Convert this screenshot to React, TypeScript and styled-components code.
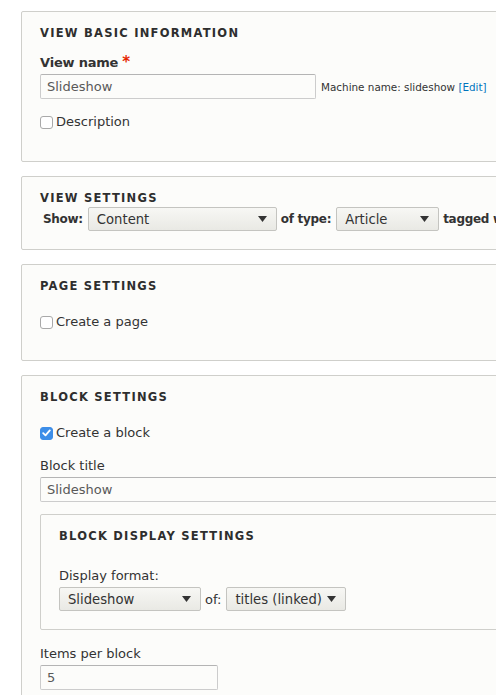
import React from "react";
import styled, { createGlobalStyle } from "styled-components";

const Global = createGlobalStyle`
  html, body { margin: 0; padding: 0; background: #ffffff; overflow: hidden; }
  body { font-family: "DejaVu Sans", "Liberation Sans", sans-serif; color: #333; font-size: 13px; }
  * { box-sizing: border-box; }
`;

const Page = styled.div`
  width: 496px;
  height: 695px;
  overflow: hidden;
  padding: 11px 0 0 21px;
  display: flex;
  flex-direction: column;
  gap: 14px;
`;

const Fieldset = styled.section<{ $pb: number; $inner?: boolean }>`
  width: ${(p) => (p.$inner ? "500px" : "540px")};
  flex-shrink: 0;
  border: 1px solid #cfcfcb;
  border-radius: 2px;
  background: #fcfcfa;
  padding: 12px 18px ${(p) => p.$pb}px 18px;
  display: flex;
  flex-direction: column;
`;

const Legend = styled.div`
  font-weight: bold;
  font-size: 11.5px;
  line-height: 18px;
  letter-spacing: 1.25px;
  text-transform: uppercase;
  color: #2e2e2e;
`;

const Label = styled.div<{ $bold?: boolean; $mt: number }>`
  margin-top: ${(p) => p.$mt}px;
  font-weight: ${(p) => (p.$bold ? "bold" : "normal")};
  letter-spacing: ${(p) => (p.$bold ? "-0.2px" : "0")};
  line-height: 18px;
  font-size: 13px;
  color: #333;
`;

const Required = styled.span`
  color: #e62600;
  margin-left: 4px;
  font-size: 15px;
`;

const InputRow = styled.div`
  display: flex;
  align-items: center;
  gap: 5px;
  margin-top: 2px;
`;

const TextInput = styled.div<{ $w?: number }>`
  width: ${(p) => (p.$w ? `${p.$w}px` : "100%")};
  height: 25px;
  border: 1px solid #ccc;
  border-top-color: #b4b4b4;
  border-radius: 2px;
  background: #fcfcfa;
  padding: 0 6px;
  display: flex;
  align-items: center;
  font-size: 13px;
  color: #595959;
`;

const Machine = styled.span`
  font-size: 10.4px;
  color: #333;
  white-space: nowrap;
`;

const EditLink = styled.span`
  color: #0074bd;
`;

const CheckRow = styled.div<{ $mt: number }>`
  margin-top: ${(p) => p.$mt}px;
  display: flex;
  align-items: center;
  gap: 3px;
  line-height: 18px;
  font-size: 13px;
  color: #333;
`;

const Box = styled.span<{ $checked?: boolean }>`
  width: 13px;
  height: 13px;
  border-radius: 3px;
  border: 1px solid ${(p) => (p.$checked ? "#3d8ee8" : "#a9a9a9")};
  background: ${(p) => (p.$checked ? "#3d8ee8" : "#fff")};
  display: flex;
  align-items: center;
  justify-content: center;
  flex-shrink: 0;
`;

const SettingsRow = styled.div<{ $indent?: number }>`
  display: flex;
  align-items: center;
  gap: 4px;
  padding-left: ${(p) => p.$indent ?? 0}px;
  white-space: nowrap;
`;

const InlineLabel = styled.span<{ $bold?: boolean }>`
  font-weight: ${(p) => (p.$bold ? "bold" : "normal")};
  font-size: ${(p) => (p.$bold ? "12px" : "13px")};
  letter-spacing: ${(p) => (p.$bold ? "-0.3px" : "0")};
  color: #333;
  padding: 0 1px 0 0;
`;

const Select = styled.div<{ $w: number }>`
  width: ${(p) => p.$w}px;
  height: 24px;
  flex-shrink: 0;
  border: 1px solid #c4c4c0;
  border-radius: 2px;
  background: linear-gradient(#f7f7f4, #e9e9e4);
  display: flex;
  align-items: center;
  justify-content: space-between;
  padding: 0 9px 0 8px;
  font-size: 13.2px;
  color: #333;
`;

const Arrow = () => (
  <svg width="9" height="6" viewBox="0 0 9 6">
    <path d="M0 0 H9 L4.5 6 Z" fill="#333" />
  </svg>
);

const Check = () => (
  <svg width="9" height="8" viewBox="0 0 9 8">
    <path d="M1.2 4.2 L3.5 6.4 L7.8 1.4" stroke="#fff" strokeWidth="1.8" fill="none" strokeLinecap="round" strokeLinejoin="round" />
  </svg>
);

const InnerWrap = styled.div`
  margin-top: 12px;
`;

const Field = styled.div<{ $mt: number; $gap?: number }>`
  margin-top: ${(p) => p.$mt}px;
  display: flex;
  flex-direction: column;
  gap: ${(p) => p.$gap ?? 2}px;
`;

export default function App() {
  return (
    <>
      <Global />
      <Page>
        <Fieldset $pb={30}>
          <Legend>View basic information</Legend>
          <Label $bold $mt={11}>
            View name<Required>*</Required>
          </Label>
          <InputRow>
            <TextInput $w={276}>Slideshow</TextInput>
            <Machine>
              Machine name: slideshow <EditLink>[Edit]</EditLink>
            </Machine>
          </InputRow>
          <CheckRow $mt={14}>
            <Box />
            Description
          </CheckRow>
        </Fieldset>

        <Fieldset $pb={18}>
          <Legend>View settings</Legend>
          <SettingsRow $indent={3}>
            <InlineLabel $bold>Show:</InlineLabel>
            <Select $w={189}>
              Content
              <Arrow />
            </Select>
            <InlineLabel $bold>of type:</InlineLabel>
            <Select $w={103}>
              Article
              <Arrow />
            </Select>
            <InlineLabel $bold>tagged with</InlineLabel>
          </SettingsRow>
        </Fieldset>

        <Fieldset $pb={29}>
          <Legend>Page settings</Legend>
          <CheckRow $mt={18}>
            <Box />
            Create a page
          </CheckRow>
        </Fieldset>

        <Fieldset $pb={20}>
          <Legend>Block settings</Legend>
          <CheckRow $mt={18}>
            <Box $checked>
              <Check />
            </Box>
            Create a block
          </CheckRow>
          <Field $mt={15}>
            <Label $mt={0}>Block title</Label>
            <TextInput>Slideshow</TextInput>
          </Field>
          <InnerWrap>
            <Fieldset $pb={18} $inner>
              <Legend>Block display settings</Legend>
              <Field $mt={22} $gap={2}>
                <Label $mt={0}>Display format:</Label>
                <SettingsRow>
                  <Select $w={142}>
                    Slideshow
                    <Arrow />
                  </Select>
                  <InlineLabel>of:</InlineLabel>
                  <Select $w={120}>
                    titles (linked)
                    <Arrow />
                  </Select>
                </SettingsRow>
              </Field>
            </Fieldset>
          </InnerWrap>
          <Field $mt={15}>
            <Label $mt={0}>Items per block</Label>
            <TextInput $w={178}>5</TextInput>
          </Field>
        </Fieldset>
      </Page>
    </>
  );
}
